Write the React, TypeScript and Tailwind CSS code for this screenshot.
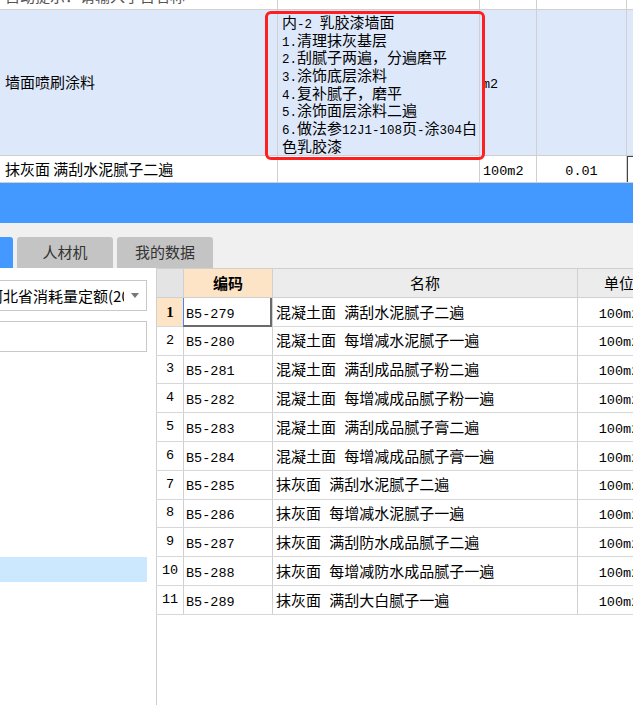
import React from "react";

const RUNS = /[\x00-\x7f]+|[^\x00-\x7f]+/g;

// ASCII runs get a narrow mono face so they keep the half-width look of the original
const Txt: React.FC<{ s: string; small?: boolean }> = ({ s, small }) => (
  <span className="whitespace-pre">
    {(s.match(RUNS) || []).map((run, i) =>
      /^[\x00-\x7f]/.test(run) ? (
        <span
          key={i}
          className={
            small
              ? "font-['Liberation_Mono',monospace] text-[12.5px] leading-none"
              : "font-['Liberation_Mono',monospace] text-[13.5px] leading-none"
          }
        >
          {run}
        </span>
      ) : (
        <span key={i}>{run}</span>
      )
    )}
  </span>
);

const descLines = [
  "内-2 乳胶漆墙面",
  "1.清理抹灰基层",
  "2.刮腻子两遍，分遍磨平",
  "3.涂饰底层涂料",
  "4.复补腻子，磨平",
  "5.涂饰面层涂料二遍",
  "6.做法参12J1-108页-涂304白",
  "色乳胶漆",
];

const rows = [
  ["B5-279", "混凝土面 满刮水泥腻子二遍"],
  ["B5-280", "混凝土面 每增减水泥腻子一遍"],
  ["B5-281", "混凝土面 满刮成品腻子粉二遍"],
  ["B5-282", "混凝土面 每增减成品腻子粉一遍"],
  ["B5-283", "混凝土面 满刮成品腻子膏二遍"],
  ["B5-284", "混凝土面 每增减成品腻子膏一遍"],
  ["B5-285", "抹灰面 满刮水泥腻子二遍"],
  ["B5-286", "抹灰面 每增减水泥腻子一遍"],
  ["B5-287", "抹灰面 满刮防水成品腻子二遍"],
  ["B5-288", "抹灰面 每增减防水成品腻子一遍"],
  ["B5-289", "抹灰面 满刮大白腻子一遍"],
];

export default function App() {
  return (
    <div className="w-[633px] h-[705px] overflow-hidden bg-white text-black text-[15px] font-['Noto_Sans_CJK_SC',sans-serif]">
      {/* upper list */}
      <div className="relative h-[183px]">
        <div className="flex h-[10px] border-b border-[#d0d0d0]">
          <div className="w-[278px] border-r border-[#d0d0d0] overflow-hidden pl-[5px]">
            <div className="-mt-[13px] leading-[18px] text-[#555] whitespace-nowrap">自动提示：请输入子目名称</div>
          </div>
          <div className="w-[202px] border-r border-[#d0d0d0]" />
          <div className="w-[57px] border-r border-[#d0d0d0]" />
          <div className="w-[90px] border-r border-[#d0d0d0]" />
          <div className="flex-1" />
        </div>

        <div className="flex h-[146px] border-b border-[#d0d0d0] bg-[#dde9fb]">
          <div className="w-[278px] border-r border-[#d0d0d0] flex items-center pl-[5px]">墙面喷刷涂料</div>
          <div className="w-[202px] border-r border-[#d0d0d0] pl-[4px] pt-[3px] whitespace-nowrap overflow-hidden">
            {descLines.map((l) => (
              <div key={l} className="h-[17.7px] leading-[17.7px]">
                <Txt s={l} small />
              </div>
            ))}
          </div>
          <div className="w-[57px] border-r border-[#d0d0d0] flex items-center pl-[2px]">
            <Txt s="m2" />
          </div>
          <div className="w-[90px] border-r border-[#d0d0d0]" />
          <div className="flex-1" />
        </div>

        <div className="flex h-[27px] border-b border-[#d0d0d0]">
          <div className="w-[278px] border-r border-[#d0d0d0] flex items-center pl-[5px] whitespace-nowrap">抹灰面 满刮水泥腻子二遍</div>
          <div className="w-[202px] border-r border-[#d0d0d0]" />
          <div className="w-[57px] border-r border-[#d0d0d0] flex items-center pl-[3px]">
            <Txt s="100m2" />
          </div>
          <div className="w-[90px] border-r border-[#d0d0d0] flex items-center justify-center">
            <Txt s="0.01" />
          </div>
          <div className="flex-1 border-l border-t border-[#444]" />
        </div>

        {/* red highlight around the description */}
        <div className="absolute left-[265px] top-[11px] w-[220px] h-[149px] border-[3px] border-[#ff1f1f] rounded-[6px]" />
      </div>

      {/* blue title bar */}
      <div className="h-[40px] bg-[#4399ff]" />

      {/* tabs */}
      <div className="h-[45px] bg-[#f0f0f0] flex items-end gap-[4px]">
        <div className="w-[13px] h-[31px] bg-[#4399ff] rounded-tr-[3px]" />
        <div className="w-[96px] h-[31px] bg-[#c4c4c4] rounded-t-[3px] flex items-center justify-center text-[#333]">人材机</div>
        <div className="w-[96px] h-[31px] bg-[#c4c4c4] rounded-t-[3px] flex items-center justify-center text-[#333]">我的数据</div>
      </div>

      <div className="flex h-[437px]">
        {/* left panel */}
        <div className="w-[156px] bg-white overflow-hidden">
          <div className="mt-[12px] -ml-[20px] w-[167px] h-[31px] border border-[#c8c8c8] flex items-center">
            <div className="flex-1 overflow-hidden whitespace-nowrap pl-[7px] leading-[29px]">河北省消耗量定额(2019)</div>
            <div className="w-[22px] flex justify-center">
              <svg width="8" height="5" viewBox="0 0 8 5">
                <path d="M0 0 L8 0 L4 5 Z" fill="#777" />
              </svg>
            </div>
          </div>
          <div className="mt-[10px] -ml-[20px] w-[167px] h-[31px] border border-[#c8c8c8]" />
          <div className="mt-[205px] w-[147px] h-[25px] bg-[#cce8ff]" />
        </div>

        {/* list grid */}
        <div className="flex-1 border-l border-[#d0d0d0] overflow-hidden bg-white">
          <div className="w-[600px]">
            <div className="flex h-[30px] border-t border-b border-[#d0d0d0]">
              <div className="w-[27px] shrink-0 border-r border-[#d0d0d0] bg-[#e4e4e4]" />
              <div className="w-[89px] shrink-0 border-r border-[#d0d0d0] bg-[#fde4c6] flex items-center justify-center font-bold">编码</div>
              <div className="w-[305px] shrink-0 border-r border-[#d0d0d0] bg-[#ececec] flex items-center justify-center">名称</div>
              <div className="w-[83px] shrink-0 border-r border-[#d0d0d0] bg-[#ececec] flex items-center justify-center">单位</div>
            </div>
            {rows.map(([code, name], i) => (
              <div key={code} className="flex h-[28.8px] border-b border-[#d8d8d8]">
                <div
                  className={
                    i === 0
                      ? "w-[27px] shrink-0 border-r border-[#d0d0d0] bg-[#fde4c6] flex items-center justify-center font-bold font-['Liberation_Serif',serif] text-[15px]"
                      : "w-[27px] shrink-0 border-r border-[#d0d0d0] flex items-center justify-center font-['Liberation_Mono',monospace] text-[13.5px]"
                  }
                >
                  {i + 1}
                </div>
                <div className="relative w-[89px] shrink-0 border-r border-[#d0d0d0] flex items-center pl-[2px]">
                  <Txt s={code} />
                  {i === 0 && (
                    <div className="absolute -left-[1px] top-0 -bottom-[1px] right-0 border-l border-r-2 border-b-2 border-l-[#3b8cff] border-r-[#6b6b6b] border-b-[#6b6b6b]" />
                  )}
                </div>
                <div className="w-[305px] shrink-0 border-r border-[#d0d0d0] flex items-center pl-[3px]">
                  <Txt s={name} />
                </div>
                <div className="w-[83px] shrink-0 border-r border-[#d0d0d0] flex items-center justify-center">
                  <Txt s="100m2" />
                </div>
              </div>
            ))}
          </div>
        </div>
      </div>
    </div>
  );
}
